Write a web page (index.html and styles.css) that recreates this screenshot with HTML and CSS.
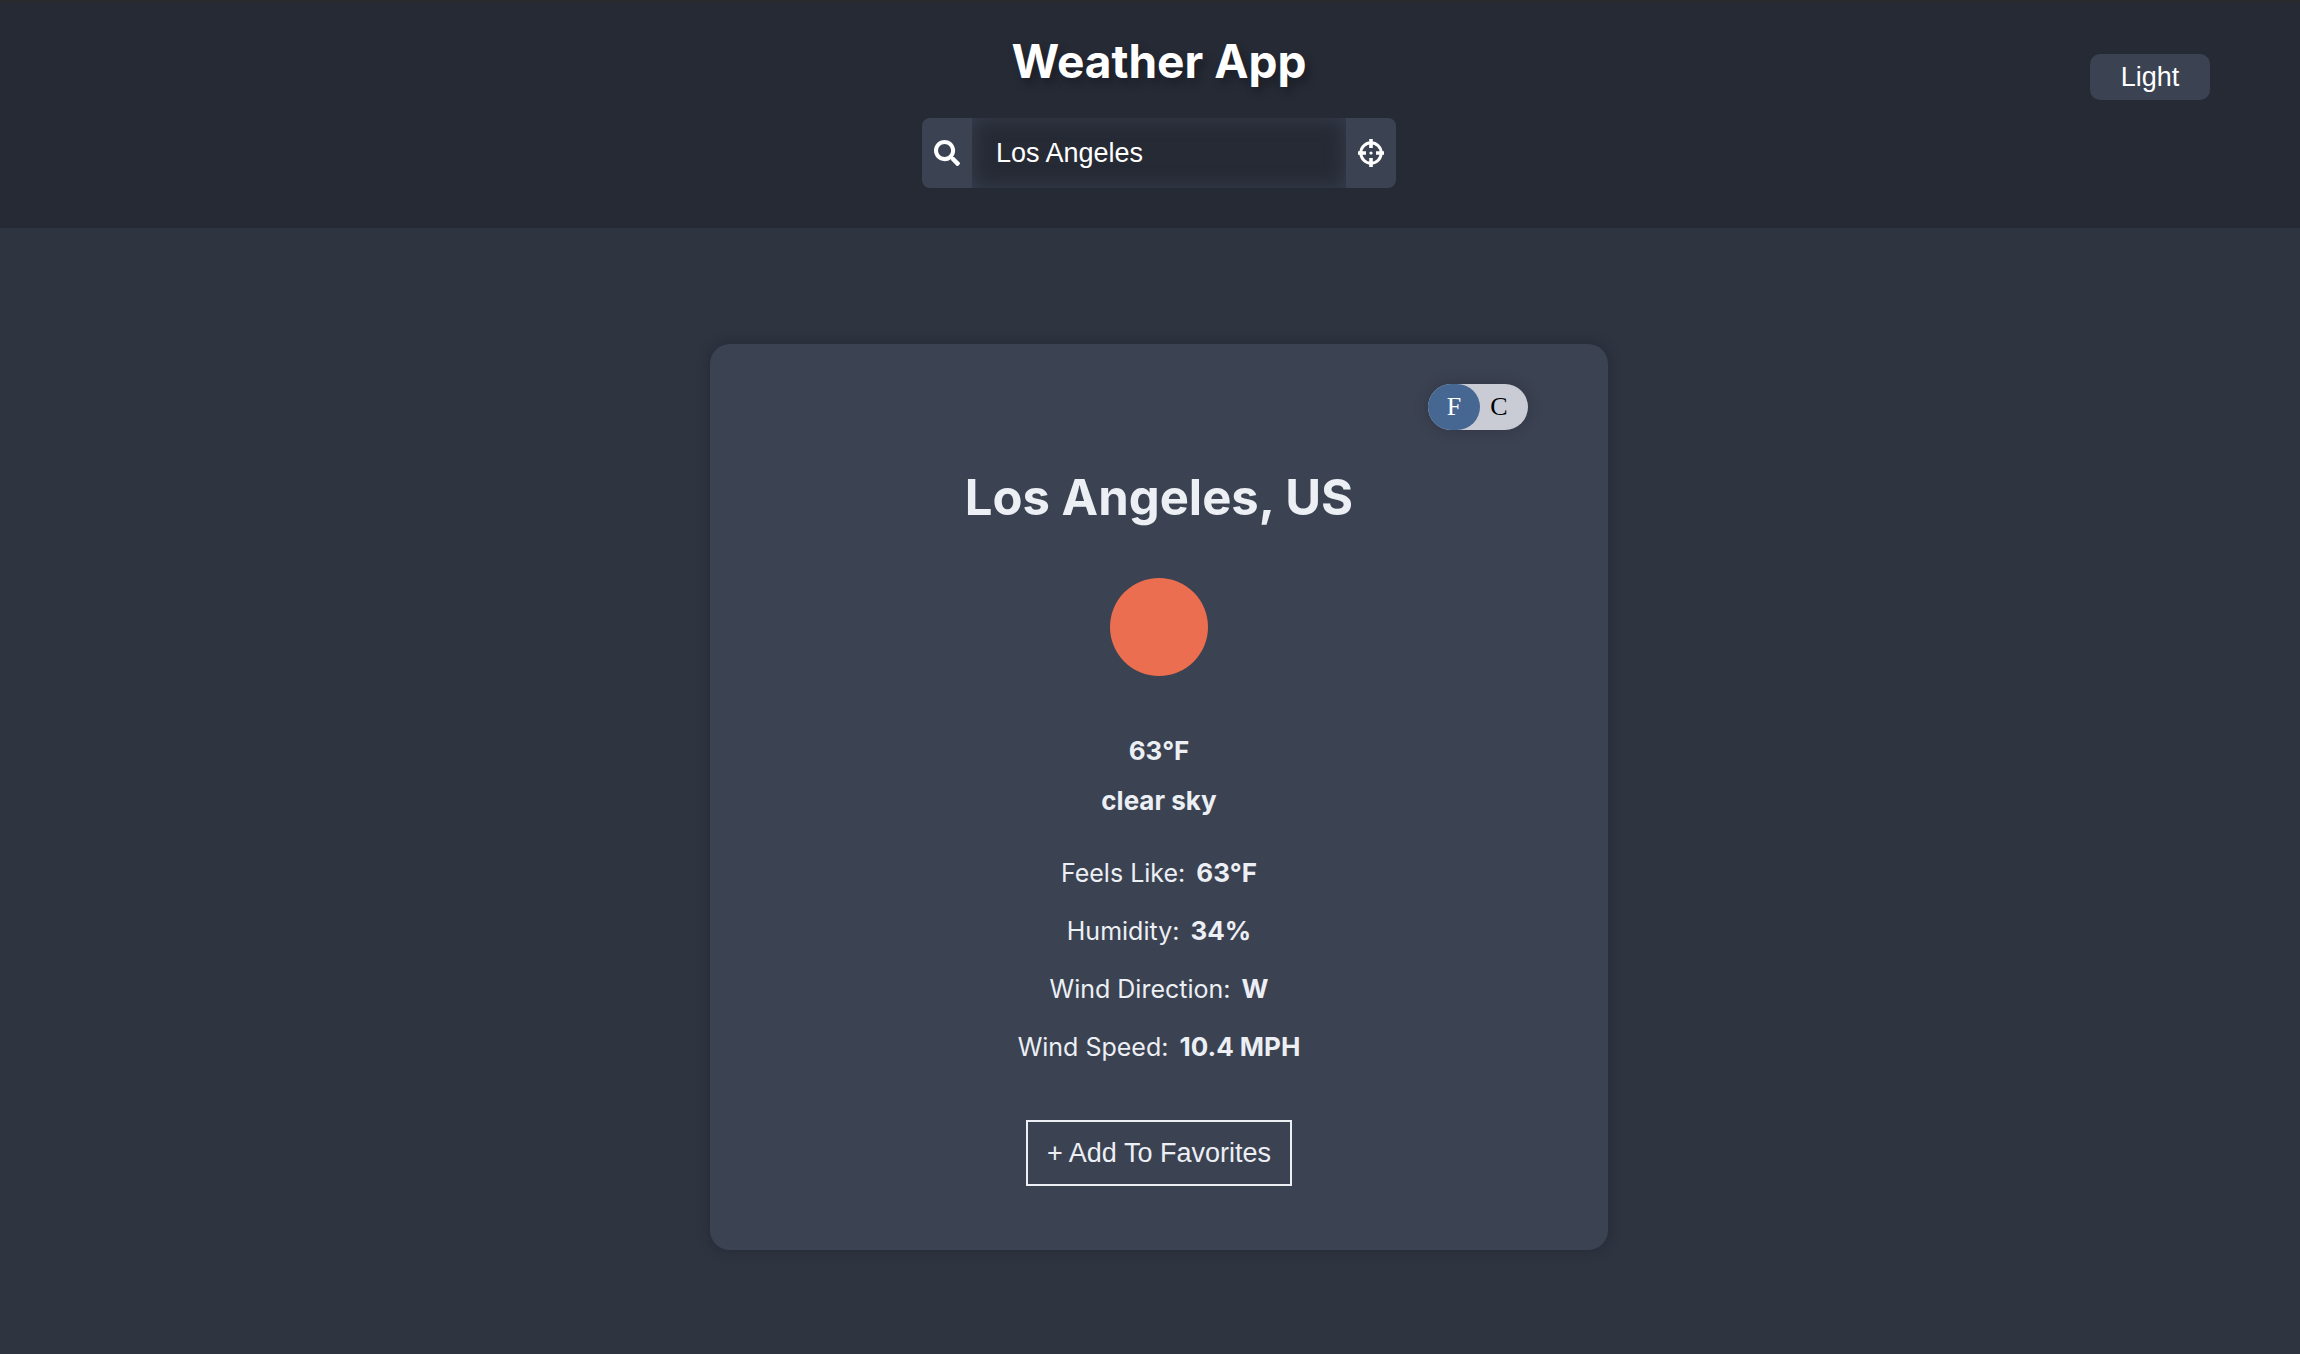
FILE: index.html
```html
<!DOCTYPE html>
<html lang="en">
<head>
<meta charset="utf-8">
<meta name="viewport" content="width=device-width, initial-scale=1">
<title>Weather App</title>
<link rel="stylesheet" href="styles.css">
</head>
<body>
<header class="header">
  <div class="brand">
    <h1 class="title">Weather App</h1>
    <form class="search" role="search">
      <button class="icon-button" type="submit" aria-label="Search">
        <svg class="icon" viewBox="0 0 512 512" fill="currentColor" aria-hidden="true"><path d="M505 442.700L405.300 343c-4.500-4.500-10.600-7-17-7H372c27.600-35.300 44-79.700 44-128C416 93.100 322.900 0 208 0S0 93.100 0 208s93.100 208 208 208c48.300 0 92.700-16.400 128-44v16.300c0 6.400 2.500 12.500 7 17l99.700 99.700c9.400 9.400 24.600 9.400 33.900 0l28.300-28.300c9.400-9.400 9.400-24.600.1-34zM208 336c-70.700 0-128-57.200-128-128 0-70.700 57.200-128 128-128 70.700 0 128 57.200 128 128 0 70.700-57.200 128-128 128z"/></svg>
      </button>
      <input class="search-input" type="text" value="Los Angeles" aria-label="City">
      <button class="icon-button" type="button" aria-label="Use my location">
        <svg class="icon" viewBox="0 0 26 28" aria-hidden="true"><circle cx="13" cy="14" r="10.200" fill="none" stroke="currentColor" stroke-width="3"/><path d="M13 0v9M13 19v9M0 14h8M18 14h8" fill="none" stroke="currentColor" stroke-width="3.600"/><circle cx="13" cy="14" r="1.600" fill="currentColor"/></svg>
      </button>
    </form>
  </div>
  <button class="theme-button" type="button">Light</button>
</header>
<main class="main">
  <section class="card">
    <div class="units" role="group" aria-label="Temperature unit">
      <button class="unit unit-active" type="button" aria-pressed="true">F</button>
      <button class="unit" type="button" aria-pressed="false">C</button>
    </div>
    <h2 class="city">Los Angeles, US</h2>
    <svg class="sun" viewBox="0 0 98 98" role="img" aria-label="Sun"><circle cx="49" cy="49" r="49"/></svg>
    <p class="summary">63°F</p>
    <p class="summary">clear sky</p>
    <div class="details">
      <p class="detail">Feels Like: <strong class="value">63°F</strong></p>
      <p class="detail">Humidity: <strong class="value">34%</strong></p>
      <p class="detail">Wind Direction: <strong class="value">W</strong></p>
      <p class="detail">Wind Speed: <strong class="value">10.4 MPH</strong></p>
    </div>
    <button class="favorite" type="button">+ Add To Favorites</button>
  </section>
</main>
</body>
</html>
```

FILE: styles.css
```css
* {
  box-sizing: border-box;
  margin: 0;
}

body {
  min-height: 100vh;
  background: #2e3440;
  color: #eceff4;
  font-family: Inter, sans-serif;
  font-size: 25px;
}

button,
input {
  border: 0;
  padding: 0;
  color: #fff;
  font-family: "Liberation Sans", Arial, sans-serif;
  font-size: 27px;
}

button {
  cursor: pointer;
}

.header {
  display: grid;
  grid-template-columns: 1fr auto 1fr;
  align-items: start;
  padding: 30px 90px 40px 108px;
  border-top: 2px solid #282a2b;
  background: #262a35;
}

.brand {
  grid-column: 2;
  display: flex;
  flex-direction: column;
  align-items: center;
  gap: 28px;
}

.title {
  color: #fff;
  font-size: 46px;
  line-height: 58px;
  text-shadow: 4px 6px 10px rgba(0, 0, 0, 0.3);
}

.search {
  display: flex;
  height: 70px;
  border-radius: 8px;
  overflow: hidden;
}

.icon-button {
  display: flex;
  align-items: center;
  justify-content: center;
  width: 50px;
  background: #3b4252;
}

.icon {
  width: 26px;
  height: 28px;
}

.search-input {
  width: 374px;
  padding: 0 24px;
  border-radius: 0;
  background: #262a35;
  box-shadow: inset 0 0 20px #383f4e;
}

.theme-button {
  justify-self: end;
  width: 120px;
  height: 46px;
  margin-top: 22px;
  border-radius: 10px;
  background: #3b4252;
}

.main {
  padding: 116px 0 104px 18px;
}

.card {
  display: flex;
  flex-direction: column;
  align-items: center;
  max-width: 898px;
  margin: 0 auto;
  padding: 40px 80px 64px;
  border-radius: 20px;
  background: #3b4252;
  box-shadow: 0 0 16px rgba(0, 0, 0, 0.2);
}

.units {
  display: flex;
  align-self: flex-end;
  width: 100px;
  height: 46px;
  border-radius: 23px;
  background: #caccd5;
  box-shadow: 0 0 16px rgba(0, 0, 0, 0.2);
}

.unit {
  flex: 1;
  padding-right: 10px;
  background: none;
  color: #000;
  font-family: "Liberation Serif", "Times New Roman", serif;
  font-size: 26px;
}

.unit-active {
  flex: none;
  width: 52px;
  padding-right: 0;
  border-radius: 23px;
  background: #476793;
  color: #fff;
}

.city {
  margin-top: 38px;
  font-size: 49px;
  line-height: 60px;
}

.sun {
  width: 98px;
  height: 98px;
  margin: 50px 0;
  fill: #eb6e50;
}

.summary {
  font-size: 26px;
  font-weight: 700;
  line-height: 50px;
}

.details {
  margin: 18px 0 44px;
  text-align: center;
}

.detail {
  height: 58px;
  line-height: 58px;
}

.value {
  margin-left: 4px;
  font-size: 26px;
}

.favorite {
  width: 266px;
  height: 66px;
  border: 2px solid #eceff4;
  background: none;
  color: #eceff4;
}
```
